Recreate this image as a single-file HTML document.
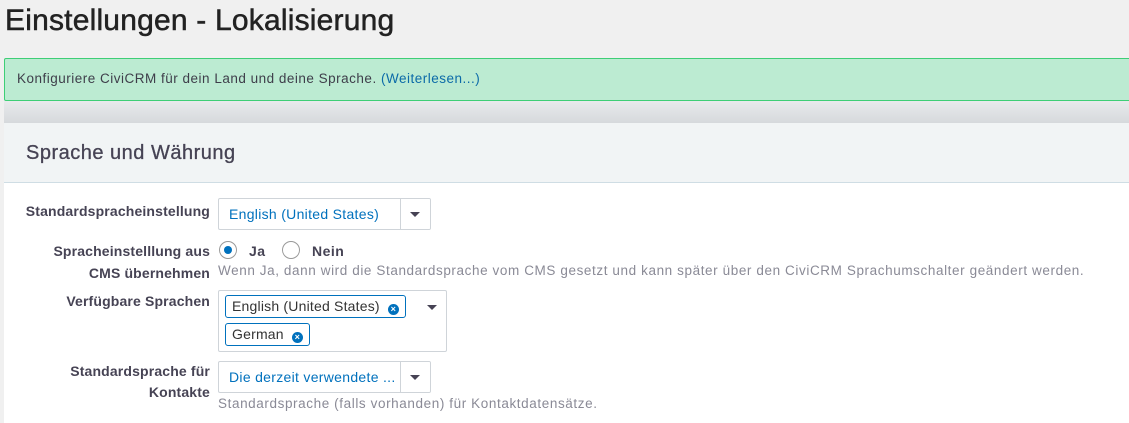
<!DOCTYPE html>
<html><head><style>
*{box-sizing:border-box;margin:0;padding:0}
body{width:1129px;height:419px;overflow:hidden;background:#f0f0f0;font-family:"Liberation Sans",sans-serif;color:#464354;font-size:14px;position:relative;letter-spacing:0.5px}
.abs{position:absolute}
h1{position:absolute;left:5px;top:4px;font-size:30px;font-weight:normal;color:#222;letter-spacing:0.2px;-webkit-text-stroke:0.5px #222}
.green{left:4px;top:58px;width:1130px;height:43px;background:#bcebd2;border:1px solid #3ece76;border-radius:2px;padding:12px 12px;font-size:13.5px;color:#3e3e4a}
.green a{color:#0b6aa8;text-decoration:none}
.shadow{left:4px;top:101px;width:1130px;height:22px;background:linear-gradient(#e8eaec,#d6d9dc)}
.panel{left:4px;top:123px;width:1130px;height:300px;background:#fff}
.ph{left:4px;top:123px;width:1130px;height:60px;background:#f1f4f5;border-bottom:1px solid #cfdde4;padding:19px 22px;font-size:20px;color:#464354;-webkit-text-stroke:0.3px #464354}
.lbl{right:919px;text-align:right;font-weight:bold;font-size:14px;color:#464354;line-height:22px;letter-spacing:0.15px}
.sel{left:218px;width:213px;height:32px;border:1px solid #cfd4d9;border-radius:2px;background:#fff;color:#0071bd;padding:0 10px;line-height:30px;font-size:14px;letter-spacing:0.3px;white-space:nowrap;overflow:hidden}
.sel .dv{position:absolute;right:0;top:0;bottom:0;border-left:1px solid #cfd4d9;background:#fff;width:30px}
.caret{position:absolute;width:0;height:0;border-left:5px solid transparent;border-right:5px solid transparent;border-top:5px solid #464354}
.help{left:218px;color:#8a8a96;font-size:13.5px;letter-spacing:0.6px}
.radio{width:18px;height:18px;border:1px solid #999;border-radius:50%;background:#fff}
.tag{border:1px solid #0071bd;border-radius:3px;height:23px;padding:0 6px;line-height:21px;color:#333;font-size:14px;background:#fff;letter-spacing:0.2px}
.x{display:inline-block;width:11px;height:11px;border-radius:50%;background:#0071bd;color:#fff;font-size:9px;line-height:11px;text-align:center;font-weight:bold;vertical-align:-1px;margin-left:8px;letter-spacing:0}
</style></head><body>
<h1>Einstellungen - Lokalisierung</h1>
<div class="abs green">Konfiguriere CiviCRM für dein Land und deine Sprache. <a>(Weiterlesen...)</a></div>
<div class="abs shadow"></div>
<div class="abs panel"></div>
<div class="abs ph">Sprache und Währung</div>

<div class="abs lbl" style="top:200px">Standardspracheinstellung</div>
<div class="abs sel" style="top:198px">English (United States)<span class="dv"></span><span class="caret" style="right:10px;top:13px"></span></div>

<div class="abs lbl" style="top:240px">Spracheinstelllung aus<br>CMS übernehmen</div>
<div class="abs radio" style="left:219px;top:241px"><div style="width:8px;height:8px;border-radius:50%;background:#0071bd;margin:4px"></div></div>
<div class="abs" style="left:249px;top:241px;font-weight:bold;line-height:20px">Ja</div>
<div class="abs radio" style="left:282px;top:241px"></div>
<div class="abs" style="left:312px;top:241px;font-weight:bold;line-height:20px">Nein</div>
<div class="abs help" style="top:261px;line-height:20px">Wenn Ja, dann wird die Standardsprache vom CMS gesetzt und kann später über den CiviCRM Sprachumschalter geändert werden.</div>

<div class="abs lbl" style="top:290px">Verfügbare Sprachen</div>
<div class="abs" style="left:218px;top:290px;width:229px;height:62px;border:1px solid #cfd4d9;border-radius:2px;background:#fff"></div>
<div class="abs tag" style="left:225px;top:295px">English (United States)<span class="x">×</span></div>
<div class="abs tag" style="left:225px;top:323px">German<span class="x">×</span></div>
<span class="abs caret" style="left:427px;top:305px"></span>

<div class="abs lbl" style="top:361px;line-height:21px">Standardsprache für<br>Kontakte</div>
<div class="abs sel" style="top:361px">Die derzeit verwendete ...<span class="dv"></span><span class="caret" style="right:10px;top:13px"></span></div>
<div class="abs help" style="top:394px;line-height:20px">Standardsprache (falls vorhanden) für Kontaktdatensätze.</div>
</body></html>
